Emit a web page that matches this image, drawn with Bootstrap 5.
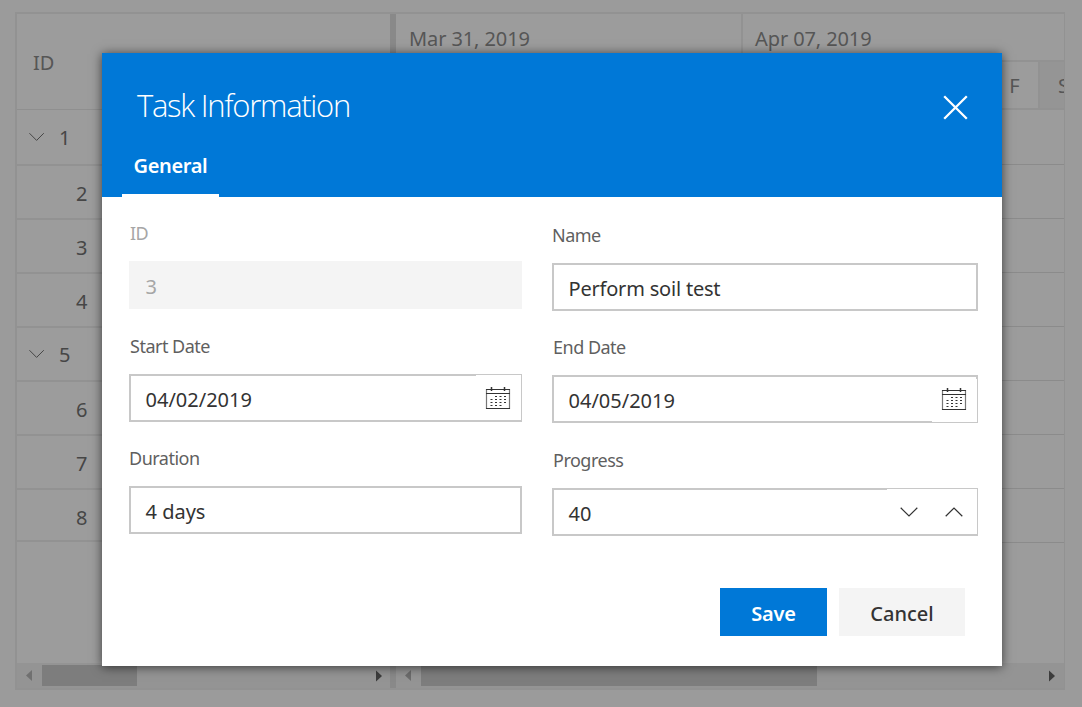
<!DOCTYPE html>
<html lang="en">
<head>
<meta charset="utf-8">
<title>Task Information</title>
<link href="https://cdn.jsdelivr.net/npm/bootstrap@5.3.0/dist/css/bootstrap.min.css" rel="stylesheet">
<style>
body{width:1082px;height:707px;overflow:hidden;background:#9b9b9b;font:20px/28px "Noto Sans","Open Sans",sans-serif;color:#464646;position:relative}
.gantt{width:1050px;height:678px;margin:12px 0 0 15px;border:2px solid #929292;border-right-width:1px;background:#9c9c9c}
.tree{width:373px}
.splitter{width:6px;background:#898989}
.tree-head{height:96px;border-bottom:1px solid #8f8f8f;padding:2px 0 0 16px;color:#565656}
.tree-row{height:54px;border-bottom:2px solid #929292;padding:3px 0 0 59px}
.tree-row.first{height:56px}
.tree-row.final{height:52px;padding-top:6px}
.tree-row.parent{padding:2px 0 0 12px;gap:14px}
.tree-row svg{margin-top:-2px}
.week-row{height:48px;border-bottom:2px solid #929292;color:#565656;letter-spacing:-.1px}
.week{padding-left:12px}
.w1{width:347px;border-right:2px solid #929292;padding-left:13px}
.day-row{height:48px;border-bottom:2px solid #929292;color:#565656}
.day-f{width:50px;border-right:2px solid #929292;padding:2px 0 0 1px}
.day-s{width:24px;padding:2px 0 0 18px;background:#959595;overflow:hidden}
.chart-row{height:54px;border-bottom:1px solid #8b8b8b}
.chart-row.first{height:55px}
.scrollbar-x{height:25px;background:#949494;padding-right:8px}
.tree .scrollbar-x{padding-right:7px}
.thumb{height:21px;background:#7d7d7d}
.dialog{position:absolute;left:102px;top:53px;width:900px;height:613px;background:#fff;box-shadow:0 1px 10px rgba(0,0,0,.62)}
.dialog-head{height:144px;background:#0078d7;color:#fff}
.title-row{padding:32px 34px 0 35px}
.dlg-title{font:300 31px/40px "Open Sans","Noto Sans",sans-serif;letter-spacing:-1.28px}
.tab{margin:22px 0 0 20px;width:97px;height:50px;border-bottom:3px solid #fff;font-weight:600;line-height:38px;letter-spacing:-.35px}
.fields{padding:22px 24px 0 27px;gap:30px;height:391px}
.col-a{width:393px}
.col-b{width:426px;padding-top:2px}
.lbl{height:28px;font-size:18px;color:#5f5f5f;margin-bottom:14px;padding-left:1px;letter-spacing:-.5px;white-space:nowrap}
.field{height:48px;border:2px solid #c8c8c8;border-radius:0;padding:3px 0 0 14.500px;font-size:20px;line-height:28px;color:#333;background:#fff;margin-bottom:23px;letter-spacing:0}
.field.prose{letter-spacing:-.2px}
.field.mb-s{margin-bottom:22px}
.field.off{background:#f4f4f4;border-color:#f4f4f4;color:#a6a6a6}
.addon{background:#fff}
.addon.date{width:45px}
.addon.spin{width:90px;padding-left:13px;gap:27px}
.thin-top{height:45px;margin:-4px -1px 0 0;align-self:flex-start}
.thin-bottom{height:43px;margin:0 -1px -1px 0;padding-bottom:2px;align-self:flex-end}
.date.thin-top{padding-top:2px}
.dlg-btn{height:48px;border:0;border-radius:0;font-size:20px;font-weight:600;line-height:28px;padding:3px 0 0;letter-spacing:-.2px}
.field.tall{padding-top:4px}
</style>
<script src="https://cdn.jsdelivr.net/npm/bootstrap@5.3.0/dist/js/bootstrap.bundle.min.js"></script>
</head>
<body>
<main class="gantt d-flex">
  <section class="tree d-flex flex-column">
    <div class="tree-head d-flex align-items-center">ID</div>
    <div class="tree-row first parent d-flex align-items-center"><svg width="16" height="10" fill="none" stroke="#464646"><path d="M.4 1.200 7.600 8.400l7.200-7.200"/></svg>1</div>
    <div class="tree-row d-flex align-items-center">2</div>
    <div class="tree-row d-flex align-items-center">3</div>
    <div class="tree-row d-flex align-items-center">4</div>
    <div class="tree-row parent d-flex align-items-center"><svg width="16" height="10" fill="none" stroke="#464646"><path d="M.4 1.200 7.600 8.400l7.200-7.200"/></svg>5</div>
    <div class="tree-row d-flex align-items-center">6</div>
    <div class="tree-row d-flex align-items-center">7</div>
    <div class="tree-row final d-flex align-items-center">8</div>
    <div class="scrollbar-x mt-auto d-flex align-items-center">
      <svg width="25" height="21"><path d="M15 5v11l-6-5.500z" fill="#707070"/></svg>
      <div class="thumb" style="width:95px"></div>
      <svg class="ms-auto" width="7" height="12"><path d="M0 .5v11l6-5.500z" fill="#3c3c3c"/></svg>
    </div>
  </section>
  <div class="splitter"></div>
  <section class="flex-grow-1 d-flex flex-column">
    <div class="week-row d-flex align-items-center">
      <div class="week w1 h-100 d-flex align-items-center pt-1">Mar 31, 2019</div>
      <div class="week h-100 d-flex align-items-center pt-1">Apr 07, 2019</div>
    </div>
    <div class="day-row d-flex justify-content-end">
      <div class="day-f d-flex align-items-center justify-content-center">F</div>
      <div class="day-s d-flex align-items-center">S</div>
    </div>
    <div class="chart-row first"></div><div class="chart-row"></div><div class="chart-row"></div><div class="chart-row"></div>
    <div class="chart-row"></div><div class="chart-row"></div><div class="chart-row"></div><div class="chart-row"></div>
    <div class="scrollbar-x mt-auto d-flex align-items-center">
      <svg width="25" height="21"><path d="M15 5v11l-6-5.500z" fill="#6c6c6c"/></svg>
      <div class="thumb" style="width:396px"></div>
      <svg class="ms-auto" width="7" height="12"><path d="M0 .5v11l6-5.500z" fill="#3c3c3c"/></svg>
    </div>
  </section>
</main>

<div class="dialog" role="dialog">
  <header class="dialog-head">
    <div class="title-row d-flex justify-content-between align-items-center">
      <div class="dlg-title">Task Information</div>
      <svg width="25" height="25" class="mt-1" fill="none" stroke="#fff" stroke-width="2.300"><path d="M1.200 1.200l22.600 22.600M23.800 1.200L1.200 23.800"/></svg>
    </div>
    <div class="tab text-center">General</div>
  </header>
  <div class="fields d-flex">
    <div class="col-a">
      <div class="lbl" style="color:#a6a6a6">ID</div>
      <div class="form-control field tall off d-flex align-items-center">3</div>
      <div class="lbl">Start Date</div>
      <div class="form-control field mb-s d-flex align-items-center justify-content-between">04/02/2019
        <span class="addon date thin-top d-flex align-items-center ps-2"><svg width="27" height="25"><use href="#calendar"/></svg></span>
      </div>
      <div class="lbl ps-0">Duration</div>
      <div class="form-control field tall d-flex align-items-center">4 days</div>
    </div>
    <div class="col-b">
      <div class="lbl ps-0">Name</div>
      <div class="form-control field tall prose mb-s d-flex align-items-center">Perform soil test</div>
      <div class="lbl">End Date</div>
      <div class="form-control field d-flex align-items-center justify-content-between">04/05/2019
        <span class="addon date thin-bottom d-flex align-items-center ps-2"><svg width="27" height="25"><use href="#calendar"/></svg></span>
      </div>
      <div class="lbl">Progress</div>
      <div class="form-control field d-flex align-items-center justify-content-between">40
        <span class="addon spin thin-top d-flex align-items-center">
          <svg width="18" height="10" fill="none" stroke="#333" stroke-width="1.200"><path d="M.7.800 9 9l8.300-8.200"/></svg>
          <svg width="18" height="10" fill="none" stroke="#333" stroke-width="1.200"><path d="M.7 9.200 9 1l8.300 8.200"/></svg>
        </span>
      </div>
    </div>
  </div>
  <footer class="d-flex gap-0" style="padding-left:618px">
    <button class="btn dlg-btn text-white" style="width:107px;background:#0078d7">Save</button>
    <button class="btn dlg-btn" style="width:126px;margin-left:12px;background:#f4f4f4;color:#333;font-weight:500;letter-spacing:0">Cancel</button>
  </footer>
</div>

<svg width="0" height="0" class="position-absolute">
  <defs>
    <g id="calendar" fill="none" stroke="#333">
      <path d="M2.500 3v20M25.500 3v20" stroke="#777" stroke-width="1.200"/>
      <path d="M2 3.500h24M2 7.500h24M2 22.500h24" stroke-width="1.200"/>
      <path d="M7.500 1v4M20.500 1v4" stroke-width="1.500"/>
      <path d="M11 10.500h11.500M6.500 13.500h16M6.500 16.500h16M6.500 19.500h11.500" stroke-width="1.100" stroke-dasharray="2 2.500"/>
    </g>
  </defs>
</svg>
</body>
</html>
